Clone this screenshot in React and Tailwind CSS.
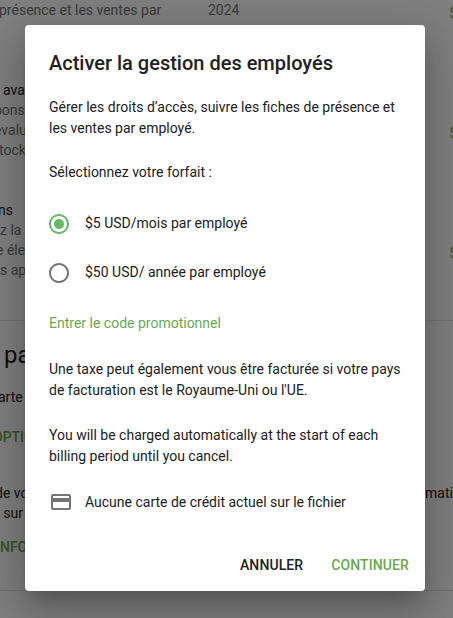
import { useState } from 'react';

const RADIO_ON = 'M12 7c-2.76 0-5 2.24-5 5s2.24 5 5 5 5-2.24 5-5-2.24-5-5-5zm0-5C6.48 2 2 6.48 2 12s4.48 10 10 10 10-4.48 10-10S17.52 2 12 2zm0 18c-4.42 0-8-3.58-8-8s3.58-8 8-8 8 3.58 8 8-3.58 8-8 8z';
const RADIO_OFF = 'M12 2C6.48 2 2 6.48 2 12s4.48 10 10 10 10-4.48 10-10S17.52 2 12 2zm0 18c-4.42 0-8-3.58-8-8s3.58-8 8-8 8 3.58 8 8-3.58 8-8 8z';
const CARD = 'M20 4H4c-1.11 0-1.99.89-1.99 2L2 18c0 1.11.89 2 2 2h16c1.11 0 2-.89 2-2V6c0-1.11-.89-2-2-2zm0 14H4v-6h16v6zm0-10H4V6h16v2z';

function Plan({ label, checked, onSelect }) {
  return (
    <button onClick={onSelect} className="flex h-[49px] w-full cursor-pointer items-center gap-[14px] text-left">
      <svg viewBox="0 0 24 24" className={`ml-[-2px] h-6 w-6 ${checked ? 'fill-[#66bb6a]' : 'fill-[#757575]'}`}>
        <path d={checked ? RADIO_ON : RADIO_OFF} />
      </svg>
      <span>{label}</span>
    </button>
  );
}

function Background() {
  return (
    <div className="h-[618px] overflow-hidden bg-white text-sm leading-5 text-[#757575]">
      <div className="flex h-5 justify-between">
        <span className="ml-[-1px] w-[209px] whitespace-nowrap">présence et les ventes par</span>
        <span className="flex-1">2024</span>
        <span className="mr-[-12px] mt-[3px] text-[#6aa84f]">$5</span>
      </div>
      <p className="ml-[3px] mt-[60px] text-[#212121]">avancé</p>
      <p className="ml-[-6px]">pons</p>
      <div className="flex h-5 justify-between">
        <span className="ml-[-6px]">évaluation</span>
        <span className="mr-[-12px] mt-[3px] text-[#6aa84f]">$5</span>
      </div>
      <p className="ml-[-1px]">tock</p>
      <p className="ml-[-2px] mt-10 text-[#212121]">ns</p>
      <p>z la connexion</p>
      <div className="flex h-5 justify-between">
        <span className="ml-[-4px]">e électronique</span>
        <span className="mr-[-12px] mt-[3px] text-[#6aa84f]">$5</span>
      </div>
      <p>s applications</p>
      <div className="mt-[40px] border-t border-[#e0e0e0]" />
      <h2 className="mt-[18px] ml-[4px] text-2xl leading-8 text-[#212121]">paiement</h2>
      <p className="mt-[16px] ml-[-2px] text-[#212121]">arte de crédit</p>
      <p className="mt-[20px] ml-[-7px] font-medium text-[#6aa84f]">OPTIONS</p>
      <div className="mt-[36px] ml-[-5px] flex text-[#212121]">
        <span className="w-[430px] shrink-0">de vos</span>
        <span className="shrink-0">mations</span>
      </div>
      <p className="ml-[-4px] text-[#212121]">- sur le compte</p>
      <p className="mt-[14px] ml-[-4px] font-medium text-[#6aa84f]">INFOS</p>
      <div className="mt-[33px] border-t border-[#e0e0e0]" />
    </div>
  );
}

export default function App() {
  const [plan, setPlan] = useState('month');

  return (
    <div className="relative h-[618px] overflow-hidden font-['Roboto',sans-serif]">
      <Background />
      <div className="absolute inset-0 flex items-start bg-black/50 pl-[25px] pt-[25px]">
        <div className="flex h-[566px] w-[400px] flex-col rounded bg-white text-sm leading-[21px] text-[#212121] shadow-[0_11px_15px_-7px_rgba(0,0,0,0.2),0_24px_38px_3px_rgba(0,0,0,0.14),0_9px_46px_8px_rgba(0,0,0,0.12)]">
          <div className="flex flex-1 flex-col px-6 pt-6">
            <h1 className="text-xl font-medium leading-7">Activer la gestion des employés</h1>
            <p className="mt-[20px]">Gérer les droits d’accès, suivre les fiches de présence et les ventes par employé.</p>
            <p className="mt-[23px]">Sélectionnez votre forfait :</p>
            <div className="mt-[16px]">
              <Plan label="$5 USD/mois par employé" checked={plan === 'month'} onSelect={() => setPlan('month')} />
              <Plan label="$50 USD/ année par employé" checked={plan === 'year'} onSelect={() => setPlan('year')} />
            </div>
            <button className="mt-[16px] cursor-pointer self-start text-[#6aa84f]">Entrer le code promotionnel</button>
            <p className="mt-[25px]">Une taxe peut également vous être facturée si votre pays de facturation est le Royaume-Uni ou l'UE.</p>
            <p className="mt-[24px]">You will be charged automatically at the start of each billing period until you cancel.</p>
            <div className="mt-[23px] flex items-center gap-[12px]">
              <svg viewBox="0 0 24 24" className="h-6 w-6 fill-[#757575]">
                <path d={CARD} />
              </svg>
              <span>Aucune carte de crédit actuel sur le fichier</span>
            </div>
          </div>
          <div className="flex justify-end gap-7 px-4 pb-[15px] font-medium tracking-[0.1px]">
            <button className="cursor-pointer">ANNULER</button>
            <button className="cursor-pointer text-[#6aa84f]">CONTINUER</button>
          </div>
        </div>
      </div>
    </div>
  );
}
